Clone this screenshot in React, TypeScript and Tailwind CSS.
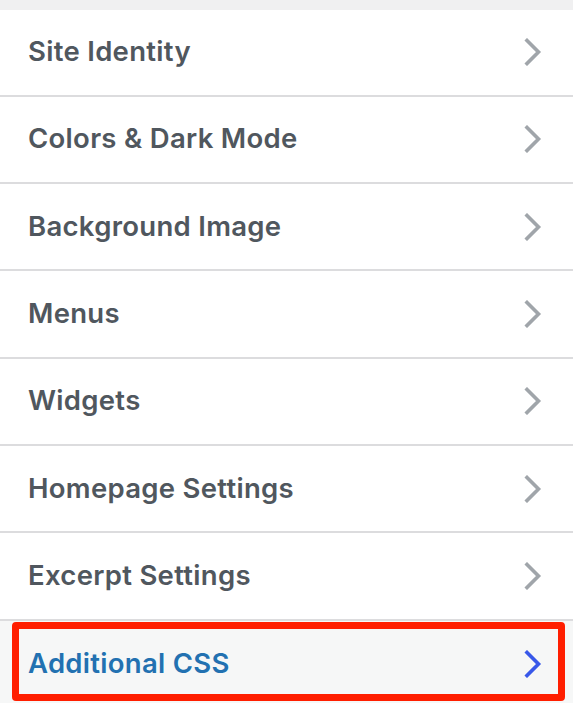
import React from "react";

const items = [
  "Site Identity",
  "Colors & Dark Mode",
  "Background Image",
  "Menus",
  "Widgets",
  "Homepage Settings",
  "Excerpt Settings",
];

function Chevron({ color }: { color: string }) {
  return (
    <svg width="18" height="28" viewBox="0 0 18 28" fill="none">
      <path d="M3 2.5 L14.5 14 L3 25.5" stroke={color} strokeWidth="3.6" strokeLinecap="square" strokeLinejoin="miter" />
    </svg>
  );
}

export default function App() {
  return (
    <div
      className="w-[573px] h-[703px] overflow-hidden bg-white relative"
      style={{ fontFamily: "Inter, 'Noto Sans', sans-serif" }}
    >
      <div className="h-[9.5px] bg-[#f0f0f1]" />
      {items.map((label) => (
        <div
          key={label}
          className="h-[87.33px] border-b-2 border-[#dcdcde] flex items-center justify-between pl-[28px] pr-[31px]"
        >
          <span className="text-[27.5px] leading-none pb-[1px] font-semibold text-[#50575e] tracking-[0.3px]">{label}</span>
          <Chevron color="#a0a5aa" />
        </div>
      ))}
      <div className="h-[87.33px] bg-[#f6f7f7] flex items-center justify-between pl-[28px] pr-[31px]">
        <span className="text-[27.5px] leading-none pb-[1px] font-semibold text-[#2271b1] tracking-[0.3px]">Additional CSS</span>
        <Chevron color="#3858e9" />
      </div>
      <div className="absolute left-[12px] top-[622px] w-[553px] h-[79px] border-[7.5px] border-[#ff1e00] rounded-[4px]" />
    </div>
  );
}
